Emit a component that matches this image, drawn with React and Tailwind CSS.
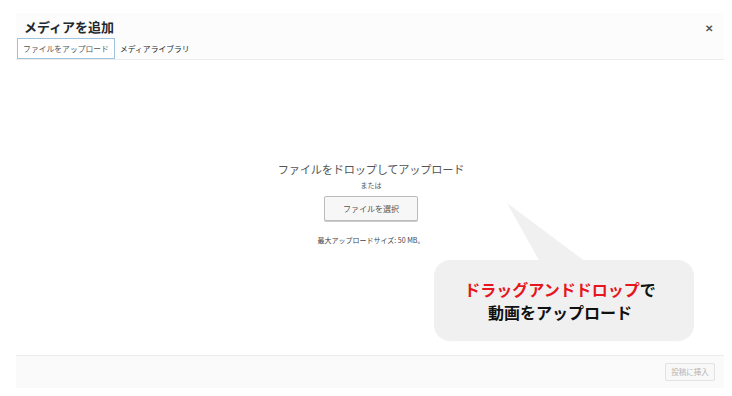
export default function App() {
  const jp = { fontFamily: '"Noto Sans CJK JP", "Noto Sans", sans-serif' };
  return (
    <div className="w-[732px] h-[396px] bg-white pt-[13px] pl-[16px] pr-[8px] overflow-hidden" style={jp}>
      <div className="flex flex-col w-[708px]">
        {/* Header */}
        <div className="relative h-[47px] bg-[#fcfcfc] border-b border-[#ececec] flex flex-col">
          <div className="pl-[8px] pt-[6px] h-[27px] text-[13px] font-bold text-[#23282d] leading-[16px]">メディアを追加</div>
          <div className="flex items-end">
            <div className="h-[21px] w-[98px] border border-[#9fc3dc] bg-white flex items-center justify-center text-[7.8px] text-[#555] leading-none ml-px">ファイルをアップロード</div>
            <div className="ml-[5px] h-[20px] flex items-center text-[7.8px] text-[#23282d] leading-none">メディアライブラリ</div>
          </div>
          <div className="absolute right-[11px] top-[10px] text-[10px] font-bold text-[#555] leading-none">✕</div>
        </div>
        {/* Content */}
        <div className="relative h-[295px] bg-white">
          <div className="flex flex-col items-center pt-[102px] pl-[2px]">
            <div className="text-[11.2px] text-[#555] leading-[14px] tracking-[-0.2px]">ファイルをドロップしてアップロード</div>
            <div className="text-[7px] text-[#555] leading-[10px] mt-[4px]">または</div>
            <div className="mt-[6px] w-[94px] h-[25px] border border-[#bbb] bg-[#f7f7f7] rounded-[2px] flex items-center justify-center text-[8px] text-[#555] shadow-[0_1px_0_#ccc]">ファイルを選択</div>
            <div className="mt-[14px] text-[7px] text-[#444] leading-[10px]">最大アップロードサイズ: 50 MB。</div>
          </div>
          {/* Callout annotation */}
          <svg className="absolute left-[488px] top-[142px]" width="90" height="62" viewBox="0 0 90 62">
            <polygon points="3,1 36,60 82,60" fill="#f0f0f0" />
          </svg>
          <div className="absolute left-[418px] top-[200px] w-[260px] h-[81px] rounded-[16px] bg-[#f0f0f0] flex flex-col items-center justify-center text-[16px] font-bold leading-[23px] text-[#111] pr-[8px]">
            <div><span className="text-[#e5161c]">ドラッグアンドドロップ</span>で</div>
            <div>動画をアップロード</div>
          </div>
        </div>
        {/* Footer */}
        <div className="h-[33px] bg-[#fafafa] border-t border-[#ececec] flex items-center justify-end pr-[9px]">
          <div className="h-[18px] w-[50px] border border-[#e2e2e2] bg-[#f8f8f8] flex items-center justify-center text-[7.5px] text-[#b5b5b5] rounded-[2px]">投稿に挿入</div>
        </div>
      </div>
    </div>
  );
}
